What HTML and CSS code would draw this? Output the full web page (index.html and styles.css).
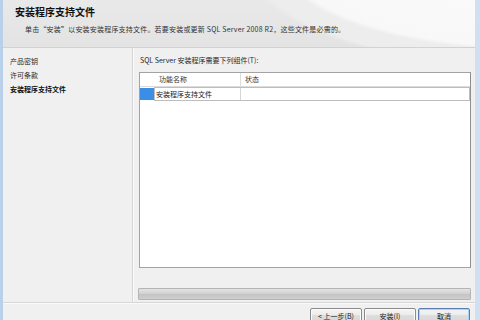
FILE: index.html
```html
<!DOCTYPE html>
<html lang="zh-CN">
<head>
<meta charset="utf-8">
<title>安装程序支持文件</title>
<link rel="stylesheet" href="styles.css">
</head>
<body>
<div class="window">
  <header class="header">
    <div class="title">安装程序支持文件</div>
    <div class="subtitle">单击“安装”以安装安装程序支持文件。若要安装或更新 SQL Server 2008 R2，这些文件是必需的。</div>
  </header>
  <div class="main">
    <nav class="nav">
      <div class="nav-item">产品密钥</div>
      <div class="nav-item">许可条款</div>
      <div class="nav-item active">安装程序支持文件</div>
    </nav>
    <section class="content">
      <div class="label">SQL Server 安装程序需要下列组件(T):</div>
      <div class="list">
        <div class="list-head">
          <div class="cell icon-cell"></div>
          <div class="cell name-cell">功能名称</div>
          <div class="cell status-cell">状态</div>
        </div>
        <div class="list-row">
          <div class="cell icon-cell"><span class="marker"></span></div>
          <div class="row-box">
            <div class="cell name-cell">安装程序支持文件</div>
            <div class="cell status-cell"></div>
          </div>
        </div>
      </div>
      <div class="progress"></div>
    </section>
  </div>
  <footer class="footer">
    <button class="btn">&lt; 上一步(B)</button>
    <button class="btn">安装(I)</button>
    <button class="btn default">取消</button>
  </footer>
</div>
</body>
</html>
```

FILE: styles.css
```css
html, body {
  margin: 0;
  padding: 0;
  width: 480px;
  height: 320px;
  overflow: hidden;
  background: #f0f0f0;
}

.window {
  box-sizing: border-box;
  width: 480px;
  height: 320px;
  display: flex;
  flex-direction: column;
  border-left: 3px solid #b9d0ea;
  border-right: 5px solid #cfe0f2;
  font-family: "Noto Sans CJK SC", "Noto Sans", sans-serif;
  font-size: 7px;
  color: #1e1e1e;
}

.header {
  height: 48px;
  flex: none;
  box-sizing: border-box;
  padding: 5px 0 0 12px;
  border-bottom: 1px solid #d2d2d2;
  background:
    radial-gradient(ellipse 250px 90px at 525px -40px, #fcfcfc 0, #f8f8f8 96%, rgba(248,248,248,0) 100%),
    radial-gradient(ellipse 300px 110px at 540px -40px, #efefef 0, #ededed 97%, rgba(236,236,236,0) 100%),
    linear-gradient(#e9e9e9, #e3e3e3);
}

.title {
  font-size: 10px;
  font-weight: 700;
  line-height: 14px;
  color: #111;
}

.subtitle {
  margin-top: 3px;
  padding-left: 10px;
  line-height: 14px;
  color: #333;
  white-space: nowrap;
  letter-spacing: 0.2px;
}

.main {
  flex: 1;
  display: flex;
  min-height: 0;
  border-bottom: 1px solid #d6d6d6;
  box-shadow: 0 1px 0 #fafafa;
}

.nav {
  width: 130px;
  flex: none;
  box-sizing: border-box;
  padding: 6px 0 0 7px;
  border-right: 1px solid #d6d6d6;
  box-shadow: 1px 0 0 #fafafa;
}

.nav-item {
  line-height: 14px;
  color: #2a2a2a;
}

.nav-item.active {
  font-weight: 700;
  color: #111;
}

.content {
  flex: 1;
  display: flex;
  flex-direction: column;
  padding: 5px 4px 0 6px;
  min-width: 0;
}

.label {
  line-height: 14px;
  padding-left: 1px;
  color: #2a2a2a;
}

.list {
  margin-top: 5px;
  height: 196px;
  flex: none;
  box-sizing: border-box;
  border: 1px solid #a3a3a3;
  border-right-color: #8f8f8f;
  background: #fff;
}

.list-head {
  display: flex;
  height: 13px;
  border-bottom: 1px solid #dcdcdc;
  line-height: 13px;
  color: #333;
}

.cell {
  box-sizing: border-box;
  white-space: nowrap;
}

.icon-cell {
  width: 14px;
  flex: none;
}

.list-head .name-cell {
  width: 87px;
  padding-left: 5px;
  border-right: 1px solid #dcdcdc;
}

.list-head .status-cell {
  padding-left: 4px;
}

.list-row {
  display: flex;
  height: 14px;
}

.marker {
  display: block;
  width: 14px;
  height: 12px;
  margin-top: 1px;
  background: #3a8ee6;
}

.row-box {
  flex: 1;
  display: flex;
  border: 1px solid #bdbdbd;
  line-height: 12px;
}

.row-box .name-cell {
  width: 86px;
  padding-left: 1px;
  border-right: 1px solid #d6d6d6;
  color: #1a1a1a;
}

.progress {
  margin-top: 20px;
  height: 12px;
  flex: none;
  margin-left: -1px;
  box-sizing: border-box;
  border: 1px solid #b4b4b4;
  border-radius: 1px;
  background: linear-gradient(#e4e4e4, #d2d2d2 45%, #c4c4c4 55%, #cfcfcf);
}

.footer {
  flex: none;
  height: 12px;
  display: flex;
  justify-content: flex-end;
  align-items: flex-start;
  gap: 2px;
  padding: 5px 5px 0 0;
  overflow: hidden;
}

.btn {
  font-family: "Noto Sans CJK SC", "Noto Sans", sans-serif;
  font-size: 7px;
  color: #222;
  width: 52px;
  height: 14px;
  padding: 2px 0 0;
  line-height: 9px;
  border: 1px solid #8a8a8a;
  border-radius: 2px;
  background: linear-gradient(#f4f4f4, #ececec 50%, #dedede 51%, #d8d8d8);
  box-shadow: inset 0 0 0 1px #fbfbfb;
}

.btn.default {
  border-color: #5a7fb0;
  box-shadow: inset 0 0 0 1px #a9d3f5;
}
```
